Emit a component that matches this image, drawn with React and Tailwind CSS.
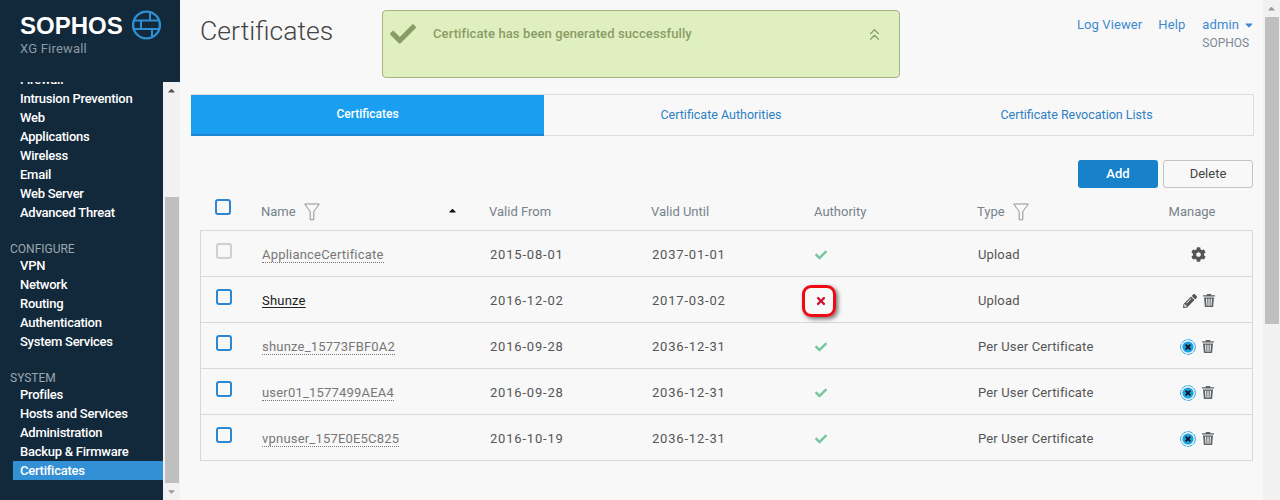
import React from 'react';
import { FaCheck, FaCog, FaPencilAlt, FaTimes, FaCaretDown, FaCaretUp } from 'react-icons/fa';
import { ChevronsUp } from 'lucide-react';

const groups = [
  { items: ['Firewall', 'Intrusion Prevention', 'Web', 'Applications', 'Wireless', 'Email', 'Web Server', 'Advanced Threat'] },
  { label: 'CONFIGURE', items: ['VPN', 'Network', 'Routing', 'Authentication', 'System Services'] },
  { label: 'SYSTEM', items: ['Profiles', 'Hosts and Services', 'Administration', 'Backup & Firmware', 'Certificates'] },
];

const rows = [
  { name: 'ApplianceCertificate', from: '2015-08-01', until: '2037-01-01', type: 'Upload', manage: 'gear', locked: true },
  { name: 'Shunze', from: '2016-12-02', until: '2017-03-02', type: 'Upload', manage: 'edit', bad: true },
  { name: 'shunze_15773FBF0A2', from: '2016-09-28', until: '2036-12-31', type: 'Per User Certificate', manage: 'revoke' },
  { name: 'user01_1577499AEA4', from: '2016-09-28', until: '2036-12-31', type: 'Per User Certificate', manage: 'revoke' },
  { name: 'vpnuser_157E0E5C825', from: '2016-10-19', until: '2036-12-31', type: 'Per User Certificate', manage: 'revoke' },
];

const Globe = () => (
  <svg width="31" height="31" viewBox="0 0 31 31" fill="none" stroke="#2f8fd3" strokeWidth="2">
    <circle cx="15.5" cy="15" r="13.4" strokeWidth="2.4" />
    <path d="M3.5 10.5h24M3 19h25M19 2.5v8M10 10.5V19M21 19v8" />
  </svg>
);

const Funnel = () => (
  <svg width="16" height="18" viewBox="0 0 16 18" fill="none" stroke="#8b9398" strokeWidth="1">
    <path d="M0.7 1h14.6L9.8 8.6v8.2H6.2V8.6z" />
  </svg>
);

const Trash = () => (
  <svg width="12" height="13" viewBox="0 0 12 13" fill="#5c6266">
    <path d="M4 0h4l.5 1.2H12v1.3H0V1.2h3.5z" />
    <path fillRule="evenodd" d="M1 3.4h10l-.9 9.6H1.9zM3 4.8l.5 6.9h1L4.2 4.8zM5.4 4.8v6.9h1.2V4.8zM7.8 4.8l-.3 6.9h1l.5-6.9z" />
  </svg>
);

const Revoke = () => (
  <svg width="16" height="16" viewBox="0 0 16 16">
    <circle cx="8" cy="8" r="7.4" fill="none" stroke="#2aa9e6" strokeWidth="1" strokeDasharray="6 0.8" />
    <circle cx="8" cy="8" r="5.6" fill="#1c9fe0" />
    <path d="M5.6 5.6l4.8 4.8M10.4 5.6l-4.8 4.8" stroke="#0c1a22" strokeWidth="1.8" />
  </svg>
);

const Checkbox = ({ locked }) => (
  <span className={`block w-[16px] h-[16px] rounded-[3px] border-2 ${locked ? 'border-[#cfcfcf]' : 'border-[#2f86d0]'}`} />
);

const Sidebar = () => (
  <aside className="w-[180px] h-[500px] shrink-0 bg-[#12293b] flex flex-col">
    <div className="h-[82px] shrink-0 relative z-10 bg-[#12293b] pl-[20px] pt-[10px]">
      <div className="flex items-center h-[31px]">
        <span className="font-['Liberation_Sans',sans-serif] font-bold text-[24px] leading-[31px] text-white w-[111px]">SOPHOS</span>
        <Globe />
      </div>
      <div className="text-[13px] leading-[16px] tracking-[0.2px] text-[#8b99a3]">XG Firewall</div>
    </div>
    <div className="flex flex-1 min-h-0">
      <nav className="w-[163px] overflow-hidden text-[13px] font-medium tracking-[-0.25px]">
        <div className="-mt-[12px]">
          {groups.map((g) => (
            <div key={g.items[0]}>
              {g.label && (
                <div className="mt-[18px] h-[16px] leading-[18px] pl-[10px] text-[12px] font-normal tracking-normal text-[#9aa7b1]">{g.label}</div>
              )}
              {g.items.map((item) => (
                <div
                  key={item}
                  className={`h-[19px] leading-[19px] ml-[13px] pl-[7px] text-white ${item === 'Certificates' ? 'bg-[#3390d4]' : ''}`}
                >
                  {item}
                </div>
              ))}
            </div>
          ))}
        </div>
      </nav>
      <div className="w-[17px] bg-[#f1f1f1] flex flex-col items-center">
        <div className="h-[17px] flex items-center justify-center text-[#555] text-[11px]"><FaCaretUp /></div>
        <div className="h-[98px]" />
        <div className="w-[14px] flex-1 bg-[#bfbfbf]" />
        <div className="h-[17px] flex items-center justify-center text-[#999] text-[11px]"><FaCaretDown /></div>
      </div>
    </div>
  </aside>
);

const Header = () => (
  <div className="h-[94px] flex items-start">
    <h1 className="w-[182px] ml-[20px] mt-[14px] text-[26.6px] leading-[34px] font-light text-[#444]">Certificates</h1>
    <div className="w-[518px] h-[68px] mt-[10px] border border-[#a3b484] rounded-[4px] bg-[#e0efc0] flex items-start text-[#8a9c66] pt-[12px]">
      <FaCheck className="ml-[7px] -mt-[2px] text-[26px] w-[26px]" />
      <span className="ml-[17px] mt-[1px] text-[13px] leading-[20px] font-medium tracking-[0.1px]">Certificate has been generated successfully</span>
      <ChevronsUp className="ml-auto mr-[15px] mt-[2px] w-[19px] h-[19px]" strokeWidth={1.5} />
    </div>
    <div className="ml-auto pr-[8px] pt-[16px] flex text-[13px] leading-[18px] tracking-[0.1px] text-[#3c8ad0]">
      <span>Log Viewer</span>
      <span className="ml-[16px]">Help</span>
      <div className="ml-[17px]">
        <div className="flex items-center">admin<FaCaretDown className="ml-[4px] text-[12px]" /></div>
        <div className="text-[#7d8a94] text-[12px] tracking-normal">SOPHOS</div>
      </div>
    </div>
  </div>
);

const Tabs = () => (
  <div className="ml-[11px] mr-[9px] h-[42px] grid grid-cols-[352px_354px_1fr] border border-[#dcdcdc] text-[12.5px] text-[#2d7fc4] text-center leading-[40px]">
    <div className="bg-[#1a9ff0] border-b-2 border-[#1c85d0] text-white -ml-[1px] -mb-[1px] text-[12px] font-medium leading-[38px]">Certificates</div>
    <div>Certificate Authorities</div>
    <div className="pl-[2px]">Certificate Revocation Lists</div>
  </div>
);

const gridCols = 'grid grid-cols-[61px_228px_162px_163px_163px_160px_1fr] items-center';

const Row = ({ r }) => (
  <div className={`${gridCols} h-[46px] pt-[2px] border-t border-[#d8d8d8] text-[13px] text-[#555]`}>
    <div className="pl-[15px] -mt-[7px]"><Checkbox locked={r.locked} /></div>
    <div>
      <span className={r.bad ? 'text-[#222] tracking-[0.2px] underline underline-offset-2' : 'text-[#777] tracking-[0.2px] border-b border-dotted border-[#777]'}>{r.name}</span>
    </div>
    <div className="tracking-[0.8px]">{r.from}</div>
    <div className="tracking-[0.8px]">{r.until}</div>
    <div className="relative">
      {r.bad ? (
        <>
          <FaTimes className="text-[#c8102e] text-[12px]" />
          <span className="absolute -left-[13px] -top-[10px] w-[34px] h-[32px] rounded-[9px] border-[3px] border-[#ee0a14] shadow-[2px_2px_4px_rgba(0,0,0,0.55)]" />
        </>
      ) : (
        <FaCheck className="text-[#74c69d] text-[12px]" />
      )}
    </div>
    <div className="tracking-[0.15px]">{r.type}</div>
    <div className={`flex items-center justify-center gap-[6px] text-[#555] ${r.manage === 'revoke' ? 'pl-[4px]' : 'pl-[7px]'}`}>
      {r.manage === 'gear' && <FaCog className="text-[15px]" />}
      {r.manage === 'edit' && <><FaPencilAlt className="text-[14px]" /><Trash /></>}
      {r.manage === 'revoke' && <><Revoke /><Trash /></>}
    </div>
  </div>
);

const Table = () => (
  <div className="ml-[20px] mr-[10px] mt-[8px]">
    <div className={`${gridCols} h-[34px] text-[13px] text-[#76828a]`}>
      <div className="pl-[15px] -mt-[12px]"><Checkbox /></div>
      <div className="flex items-center gap-[8px] relative -mt-[2px]">
        Name <Funnel />
        <FaCaretUp className="absolute right-[31px] top-[3px] text-[#111] text-[11px]" />
      </div>
      <div className="-mt-[2px]">Valid From</div>
      <div className="-mt-[2px]">Valid Until</div>
      <div className="-mt-[2px]">Authority</div>
      <div className="flex items-center gap-[8px] -mt-[2px]">Type <Funnel /></div>
      <div className="pr-[6px] text-center -mt-[2px]">Manage</div>
    </div>
    <div className="border-x border-b border-[#d8d8d8]">
      {rows.map((r) => <Row key={r.name} r={r} />)}
    </div>
  </div>
);

const App = () => (
  <div className="w-[1280px] h-[500px] overflow-hidden flex bg-[#f8f8f8] font-['Roboto',sans-serif]">
    <Sidebar />
    <main className="flex-1 min-w-0">
      <Header />
      <Tabs />
      <div className="mt-[24px] pr-[10px] flex justify-end gap-[5px] text-[13px]">
        <button className="w-[80px] h-[28px] rounded-[3px] bg-[#1781c9] text-white font-medium">Add</button>
        <button className="w-[90px] h-[28px] rounded-[3px] border border-[#c4c4c4] text-[#444]">Delete</button>
      </div>
      <Table />
    </main>
    <div className="w-[17px] bg-[#f1f1f1] flex flex-col items-center">
      <div className="h-[17px] flex items-center justify-center text-[#999] text-[11px]"><FaCaretUp /></div>
      <div className="w-[14px] h-[307px] bg-[#bfbfbf]" />
    </div>
  </div>
);

export default App;
